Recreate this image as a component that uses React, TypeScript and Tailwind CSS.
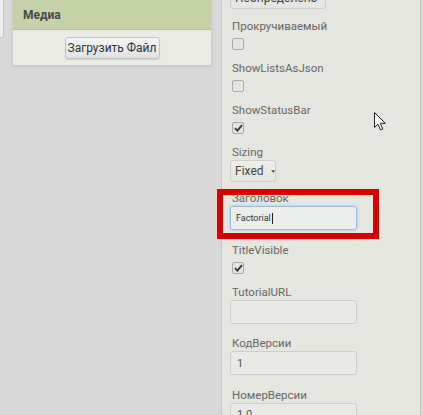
import React from "react";

function Label({ children }: { children: React.ReactNode }) {
  return <div className="ml-[2px] h-[16px] leading-[16px] text-[11.5px] text-[#666666] whitespace-nowrap">{children}</div>;
}

function Check({ checked }: { checked?: boolean }) {
  return (
    <div className="mt-[4px] mb-[10px] ml-[2px] w-[12px] h-[12px] rounded-[2px] border border-[#a9a9a9] bg-[#e4e4e2] flex items-center justify-center">
      {checked && (
        <svg width="9" height="8" viewBox="0 0 9 8">
          <path d="M1 4.2 L3.4 6.6 L8 1.2" fill="none" stroke="#333" strokeWidth="1.8" />
        </svg>
      )}
    </div>
  );
}

function TextBox({ value, focused, small }: { value?: string; focused?: boolean; small?: boolean }) {
  return (
    <div
      className={
        "mb-[11.5px] w-[127px] h-[24px] rounded-[3px] border flex items-center px-[5px] " +
        (focused
          ? "border-[#9bbbe0] bg-[#eceeee] shadow-[0_0_3px_#9cc2ec]"
          : "border-[#cdcdc9] bg-[#e9e9e5] pl-[6px]")
      }
    >
      <span className={(small ? "text-[9px] text-[#333]" : "text-[11px] text-[#555]") + " leading-none"}>{value}</span>
      {focused && <span className="ml-[1px] w-px h-[11px] bg-[#222]" />}
    </div>
  );
}

function Select({ text, w }: { text: string; w: string }) {
  return (
    <div
      className={
        w +
        " h-[22px] rounded-[3px] border border-[#cdcdc9] bg-[linear-gradient(#eeeeea,#e4e4e0)] flex items-center pl-[4px] text-[12px] text-[#444]"
      }
    >
      <span>{text}</span>
      <svg className="ml-[7px]" width="5" height="3" viewBox="0 0 5 3">
        <path d="M0 0 L5 0 L2.5 3 Z" fill="#555" />
      </svg>
    </div>
  );
}

export default function App() {
  return (
    <div
      className="relative w-[423px] h-[415px] overflow-hidden flex bg-[#d9d9d9] bg-[repeating-linear-gradient(0deg,rgba(0,0,0,0.015)_0px,rgba(0,0,0,0.015)_1px,transparent_1px,transparent_3px)]"
      style={{ fontFamily: "Roboto, 'Liberation Sans', sans-serif" }}
    >
      <div className="w-[221px] shrink-0 flex items-start">
        <div className="w-[4px] h-[38px] bg-[#ececec] border-r border-b border-[#c6c6c6]" />
        <div className="ml-[8px] w-[200px] border-x border-b border-[#cfcfca] shadow-[0_1px_2px_rgba(0,0,0,0.1)]">
          <div className="h-[30px] bg-[#c5d1a6] border-b border-[#b3bd97] flex items-center pl-[10px] text-[12px] font-bold text-[#4a4a4a]">
            Медиа
          </div>
          <div className="h-[35px] bg-[#ebebe6] flex items-center justify-center">
            <div className="w-[95px] h-[22px] rounded-[3px] border border-[#c4c4c4] bg-[linear-gradient(#f4f4f4,#e2e2e2)] shadow-[0_1px_1px_rgba(0,0,0,0.12)] flex items-center justify-center text-[12px] text-[#333]">
              Загрузить Файл
            </div>
          </div>
        </div>
      </div>

      <div className="w-[200px] shrink-0 h-full overflow-hidden border-x border-[#c8c8c4] bg-[#e6e6e1] pl-[8px]">
        <div className="mt-[-13px] mb-[9px]">
          <Select text="Неопределено" w="w-[96px]" />
        </div>
        <Label>Прокручиваемый</Label>
        <Check />
        <Label>ShowListsAsJson</Label>
        <Check />
        <Label>ShowStatusBar</Label>
        <Check checked />
        <Label>Sizing</Label>
        <div className="mb-[8px]">
          <Select text="Fixed" w="w-[46px]" />
        </div>
        <Label>Заголовок</Label>
        <TextBox value="Factorial" focused small />
        <Label>TitleVisible</Label>
        <Check checked />
        <Label>TutorialURL</Label>
        <TextBox />
        <Label>КодВерсии</Label>
        <TextBox value="1" />
        <Label>НомерВерсии</Label>
        <TextBox value="1.0" />
      </div>

      <div className="absolute left-[217px] top-[189px] w-[162px] h-[50px] border-[6px] border-[#d90000] pointer-events-none" />

      <svg className="absolute left-[374px] top-[112px]" width="13" height="19" viewBox="0 0 13 19">
        <path d="M0.5 0.5 L0.5 15.5 L4 12.2 L6.6 18 L8.8 17 L6.3 11.3 L11.3 11.3 Z" fill="#ffffff" stroke="#222" strokeWidth="1" strokeLinejoin="round" />
      </svg>
    </div>
  );
}
